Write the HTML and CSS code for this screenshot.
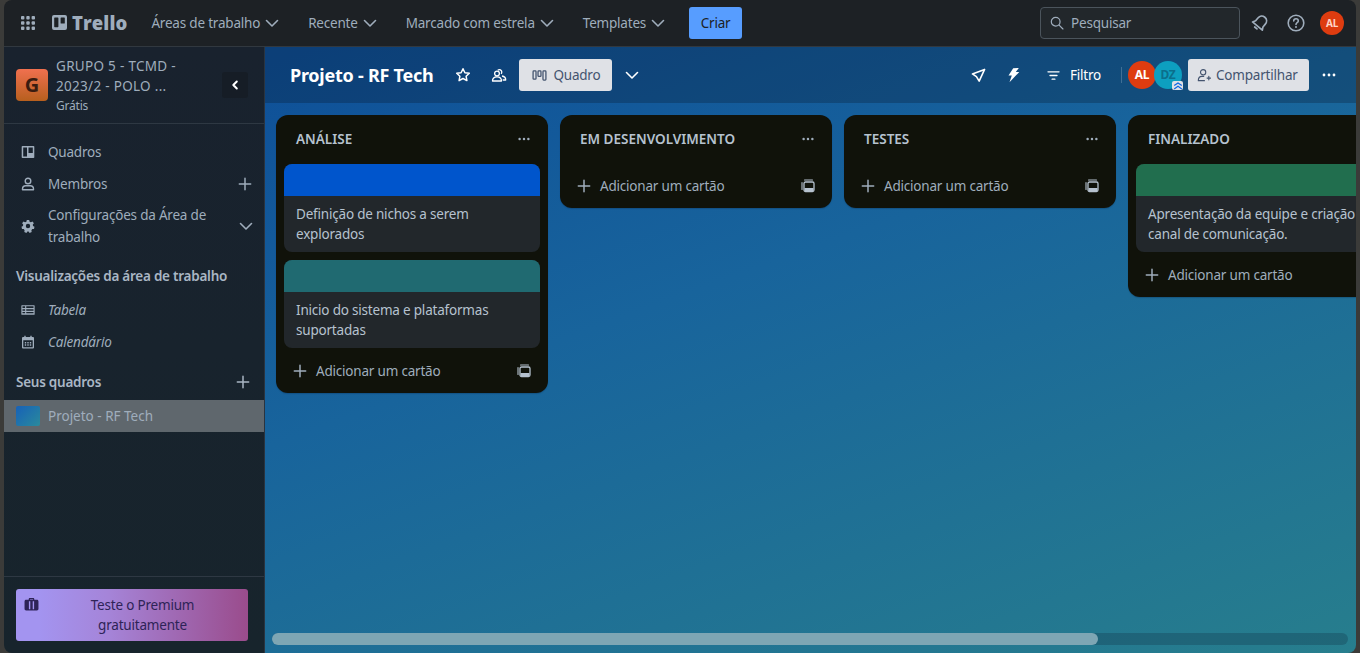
FILE: index.html
```html
<!DOCTYPE html>
<html lang="pt-BR">
<head>
    <meta charset="UTF-8">
    <meta name="viewport" content="width=device-width, initial-scale=1.0">
    <title>Projeto - RF Tech | Trello</title>
    <link rel="stylesheet" href="styles.css">
</head>
<body>
    <svg class="defs" width="0" height="0">
        <symbol id="chev" viewBox="0 0 16 16"><path d="M2.5 5.5 8 11l5.5-5.5" fill="none" stroke="currentColor" stroke-width="1.6" stroke-linecap="round" stroke-linejoin="round"/></symbol>
        <symbol id="plus" viewBox="0 0 16 16"><path d="M8 1.5v13M1.5 8h13" fill="none" stroke="currentColor" stroke-width="1.7" stroke-linecap="round"/></symbol>
        <symbol id="dots" viewBox="0 0 16 16"><circle cx="3" cy="8" r="1.4" fill="currentColor"/><circle cx="8" cy="8" r="1.4" fill="currentColor"/><circle cx="13" cy="8" r="1.4" fill="currentColor"/></symbol>
        <symbol id="tpl" viewBox="0 0 14 14"><path d="M3.5 1h8M1 3.500v7" fill="none" stroke="currentColor" stroke-width="1.100" stroke-linecap="round"/><rect x="3" y="3" width="10" height="9.500" rx="1.500" fill="none" stroke="currentColor" stroke-width="1.300"/><rect x="3.500" y="9" width="9" height="3" fill="currentColor"/></symbol>
    </svg>

    <div class="app">
        <header class="topbar">
            <svg class="grid-icon" viewBox="0 0 14 14" width="14" height="14">
                <g fill="currentColor">
                    <rect x="0" y="0" width="3.4" height="3.4" rx=".9"/><rect x="5.3" y="0" width="3.4" height="3.4" rx=".9"/><rect x="10.6" y="0" width="3.4" height="3.4" rx=".9"/>
                    <rect x="0" y="5.3" width="3.4" height="3.4" rx=".9"/><rect x="5.3" y="5.3" width="3.4" height="3.4" rx=".9"/><rect x="10.6" y="5.3" width="3.4" height="3.4" rx=".9"/>
                    <rect x="0" y="10.6" width="3.4" height="3.4" rx=".9"/><rect x="5.3" y="10.6" width="3.4" height="3.4" rx=".9"/><rect x="10.6" y="10.6" width="3.4" height="3.4" rx=".9"/>
                </g>
            </svg>
            <div class="logo">
                <svg viewBox="0 0 15 15" width="15" height="15"><path fill-rule="evenodd" fill="currentColor" d="M2 0h11a2 2 0 0 1 2 2v11a2 2 0 0 1-2 2H2a2 2 0 0 1-2-2V2a2 2 0 0 1 2-2Zm.8 2.4a.6.6 0 0 0-.6.6v8.6a.6.6 0 0 0 .6.6h3a.6.6 0 0 0 .6-.6V3a.6.6 0 0 0-.6-.6Zm6.4 0a.6.6 0 0 0-.6.6v5a.6.6 0 0 0 .6.6h3a.6.6 0 0 0 .6-.6V3a.6.6 0 0 0-.6-.6Z"/></svg>
                <span>Trello</span>
            </div>
            <nav class="topnav">
                <a class="nav-btn">Áreas de trabalho <svg width="16" height="16"><use href="#chev"/></svg></a>
                <a class="nav-btn">Recente <svg width="16" height="16"><use href="#chev"/></svg></a>
                <a class="nav-btn">Marcado com estrela <svg width="16" height="16"><use href="#chev"/></svg></a>
                <a class="nav-btn">Templates <svg width="16" height="16"><use href="#chev"/></svg></a>
            </nav>
            <button class="create">Criar</button>
            <div class="topright">
                <div class="search">
                    <svg viewBox="0 0 16 16" width="14" height="14"><circle cx="6.5" cy="6.5" r="5" fill="none" stroke="currentColor" stroke-width="1.4"/><path d="m10.4 10.4 4.4 4.4" stroke="currentColor" stroke-width="1.4" stroke-linecap="round"/></svg>
                    <span>Pesquisar</span>
                </div>
                <svg class="top-icon" viewBox="0 0 20 20" width="20" height="20"><g transform="rotate(40 10 10)" fill="none" stroke="currentColor" stroke-width="1.7" stroke-linejoin="round"><path d="M10 2.5c-3 0-4.8 2.2-4.8 5v3.6L3.6 14h12.8l-1.6-2.9V7.500c0-2.800-1.800-5-4.800-5Z"/><path d="M8.500 16.500h3" stroke-linecap="round"/></g></svg>
                <svg class="top-icon" viewBox="0 0 20 20" width="20" height="20"><circle cx="10" cy="10" r="7.800" fill="none" stroke="currentColor" stroke-width="1.600"/><path d="M7.700 8c0-1.400 1-2.300 2.300-2.300S12.300 6.600 12.300 7.900c0 1.800-2.300 1.800-2.300 3.500" fill="none" stroke="currentColor" stroke-width="1.600" stroke-linecap="round"/><circle cx="10" cy="14" r="1" fill="currentColor"/></svg>
                <div class="avatar small">AL</div>
            </div>
        </header>

        <div class="main">
            <aside class="sidebar">
                <div class="ws-head">
                    <div class="ws-logo">G</div>
                    <div class="ws-info">
                        <div class="ws-name">GRUPO 5 - TCMD -<br>2023/2 - POLO ...</div>
                        <div class="ws-plan">Grátis</div>
                    </div>
                    <button class="collapse"><svg viewBox="0 0 12 12" width="12" height="12"><path d="M7.800 2.500 4.300 6l3.500 3.500" fill="none" stroke="currentColor" stroke-width="2" stroke-linecap="round" stroke-linejoin="round"/></svg></button>
                </div>
                <div class="side-scroll">
                    <a class="side-item">
                        <svg viewBox="0 0 14 14" width="14" height="14"><path fill-rule="evenodd" fill="currentColor" d="M1.500 1h11a.8.8 0 0 1 .8.8v10.400a.8.8 0 0 1-.8.8h-11a.8.8 0 0 1-.8-.8V1.800a.8.800 0 0 1 .8-.8Zm.7 1.500v9H6v-9Zm5.300 0V8h4.300V2.500Z"/></svg>
                        <span>Quadros</span>
                    </a>
                    <a class="side-item">
                        <svg viewBox="0 0 14 14" width="14" height="14"><circle cx="7" cy="4" r="2.800" fill="none" stroke="currentColor" stroke-width="1.400"/><path d="M1.500 12.800v-.8c0-2 1.500-3.200 3.200-3.200h4.600c1.700 0 3.200 1.200 3.200 3.200v.8Z" fill="none" stroke="currentColor" stroke-width="1.400" stroke-linejoin="round"/></svg>
                        <span>Membros</span>
                        <svg class="side-act" width="14" height="14"><use href="#plus"/></svg>
                    </a>
                    <a class="side-item tall">
                        <svg viewBox="0 0 14 14" width="14" height="14"><path fill-rule="evenodd" fill="currentColor" d="M5.800 1h2.400l.4 1.700 1.300.6 1.600-.8 1.400 1.800-1.100 1.300.2 1.400 1.500.8-.5 2.200-1.700.1-.9 1.100.3 1.700-2.100 1-1-1.400H6.400l-1 1.400-2.100-1 .3-1.700-.9-1.100-1.700-.1L.5 7.800 2 7l.2-1.400L1.100 4.300l1.400-1.800 1.600.8 1.300-.6ZM7 4.800a2.200 2.200 0 1 0 0 4.400 2.200 2.200 0 0 0 0-4.400Z"/></svg>
                        <span>Configurações da Área de trabalho</span>
                        <svg class="side-act" width="16" height="16"><use href="#chev"/></svg>
                    </a>
                    <div class="side-title first">Visualizações da área de trabalho</div>
                    <a class="side-item">
                        <svg viewBox="0 0 16 14" width="16" height="14"><path fill-rule="evenodd" fill="currentColor" d="M1 1.500h14a.6.6 0 0 1 .6.6v9.800a.6.6 0 0 1-.6.6H1a.6.6 0 0 1-.6-.6V2.100a.6.6 0 0 1 .6-.6Zm.7 1.300v1.900h3V2.800Zm4.300 0v1.900h8.300V2.800ZM1.700 6v1.900h3V6ZM6 6v1.900h8.300V6ZM1.700 9.200v1.500h3V9.200Zm4.300 0v1.500h8.300V9.200Z"/></svg>
                        <span class="em">Tabela</span>
                    </a>
                    <a class="side-item">
                        <svg viewBox="0 0 14 14" width="14" height="14"><path fill-rule="evenodd" fill="currentColor" d="M3.300.8h1.400V2h4.600V.8h1.400V2H12a1 1 0 0 1 1 1v9.500a1 1 0 0 1-1 1H2a1 1 0 0 1-1-1V3a1 1 0 0 1 1-1h1.300Zm-1 4.500v6.900h9.400V5.300ZM3.800 7h1.400v1.400H3.800Zm2.500 0h1.400v1.400H6.300Zm2.500 0h1.400v1.400H8.800ZM3.800 9.300h1.400v1.400H3.800Zm2.500 0h1.400v1.400H6.300Zm2.500 0h1.400v1.400H8.800Z"/></svg>
                        <span class="em">Calendário</span>
                    </a>
                    <div class="side-title second">
                        <span>Seus quadros</span>
                        <svg width="14" height="14"><use href="#plus"/></svg>
                    </div>
                    <a class="board-row">
                        <div class="board-thumb"></div>
                        <span>Projeto - RF Tech</span>
                    </a>
                </div>
                <div class="side-foot">
                    <button class="premium">
                        <svg viewBox="0 0 16 14" width="15" height="13"><path fill-rule="evenodd" fill="currentColor" d="M5 2V1.200C5 .5 5.500 0 6.200 0h3.600c.7 0 1.200.5 1.200 1.200V2h2.800c1 0 1.700.7 1.700 1.700v8c0 1-.7 1.700-1.700 1.700H2.200C1.200 13.400.5 12.700.5 11.700v-8C.5 2.700 1.200 2 2.200 2Zm1.300 0h3.400v-.7H6.300ZM5.200 3.500v8.500h1.500V3.500Zm4.100 0v8.500h1.500V3.500Z"/></svg>
                        <span>Teste o Premium gratuitamente</span>
                    </button>
                </div>
            </aside>

            <section class="board">
                <div class="board-head">
                    <h1>Projeto - RF Tech</h1>
                    <svg class="hd-icon star" viewBox="0 0 16 16" width="16" height="16"><path d="m8 1.700 1.900 4 4.400.5-3.200 3 .8 4.400L8 11.500l-3.900 2.100.8-4.400-3.200-3 4.400-.5Z" fill="none" stroke="currentColor" stroke-width="1.500" stroke-linejoin="round"/></svg>
                    <svg class="hd-icon people" viewBox="0 0 16 16" width="16" height="16"><g fill="none" stroke="currentColor" stroke-width="1.300" stroke-linejoin="round"><circle cx="6" cy="6.500" r="2.400"/><path d="M1.500 14c0-3 2-4.200 4.500-4.200s4.500 1.200 4.500 4.200Z"/><path d="M6.800 3.300A2.300 2.300 0 1 1 10 6.800M11 9c2 .3 3.700 1.500 3.700 4h-3"/></g></svg>
                    <button class="light-btn view">
                        <svg viewBox="0 0 16 12" width="15" height="11"><g fill="none" stroke="currentColor" stroke-width="1.400"><rect x="1" y="1" width="3.200" height="9" rx=".8"/><rect x="6.400" y="1" width="3.200" height="6" rx=".8"/><rect x="11.800" y="1" width="3.200" height="10" rx=".8"/></g></svg>
                        <span>Quadro</span>
                    </button>
                    <svg class="hd-icon view-more" width="16" height="16"><use href="#chev"/></svg>
                    <div class="head-right">
                        <svg class="hd-icon" viewBox="0 0 16 16" width="15" height="15"><path d="M14.500 1.500 1.500 6.300l4.300 2.900 2.900 4.800Z" fill="none" stroke="currentColor" stroke-width="1.700" stroke-linejoin="round"/></svg>
                        <svg class="hd-icon bolt" viewBox="0 0 16 16" width="16" height="16"><path d="M8.200 1.200 13.800 1l-3 4h3.500L4.500 15.300l2.300-6.700H3.500Z" fill="currentColor"/></svg>
                        <a class="filter">
                            <svg viewBox="0 0 14 12" width="13" height="11"><path d="M1 2h12M3.200 6h7.600M5.500 10h3" stroke="currentColor" stroke-width="1.500" stroke-linecap="round"/></svg>
                            <span>Filtro</span>
                        </a>
                        <div class="divider"></div>
                        <div class="members">
                            <div class="avatar">AL</div>
                            <div class="avatar teal">DZ
                                <div class="admin-badge"><svg viewBox="0 0 10 8" width="10" height="8"><path d="M1.200 3.600 5 1l3.800 2.600M1.200 6.900 5 4.300l3.800 2.600" fill="none" stroke="#0c66e4" stroke-width="1.200"/></svg></div>
                            </div>
                        </div>
                        <button class="light-btn share">
                            <svg viewBox="0 0 16 16" width="14" height="14"><g fill="none" stroke="currentColor" stroke-width="1.300" stroke-linecap="round" stroke-linejoin="round"><circle cx="7" cy="4.800" r="3"/><path d="M1.500 14.500c0-3 1.400-5 4-5h2.200M11.500 11.500h4M13.500 9.500v4M1.500 14.500h7"/></g></svg>
                            <span>Compartilhar</span>
                        </button>
                        <svg class="hd-icon dots" width="16" height="16"><use href="#dots"/></svg>
                    </div>
                </div>

                <div class="lists">
                    <div class="list">
                        <div class="list-head"><h2>ANÁLISE</h2><svg width="14" height="14"><use href="#dots"/></svg></div>
                        <div class="cards">
                            <div class="card">
                                <div class="cover blue"></div>
                                <p>Definição de nichos a serem explorados</p>
                            </div>
                            <div class="card">
                                <div class="cover teal"></div>
                                <p>Inicio do sistema e plataformas suportadas</p>
                            </div>
                        </div>
                        <div class="list-foot"><svg class="add" width="14" height="14"><use href="#plus"/></svg><span>Adicionar um cartão</span><svg class="tpl" width="14" height="14"><use href="#tpl"/></svg></div>
                    </div>
                    <div class="list">
                        <div class="list-head"><h2>EM DESENVOLVIMENTO</h2><svg width="14" height="14"><use href="#dots"/></svg></div>
                        <div class="list-foot"><svg class="add" width="14" height="14"><use href="#plus"/></svg><span>Adicionar um cartão</span><svg class="tpl" width="14" height="14"><use href="#tpl"/></svg></div>
                    </div>
                    <div class="list">
                        <div class="list-head"><h2>TESTES</h2><svg width="14" height="14"><use href="#dots"/></svg></div>
                        <div class="list-foot"><svg class="add" width="14" height="14"><use href="#plus"/></svg><span>Adicionar um cartão</span><svg class="tpl" width="14" height="14"><use href="#tpl"/></svg></div>
                    </div>
                    <div class="list">
                        <div class="list-head"><h2>FINALIZADO</h2><svg width="14" height="14"><use href="#dots"/></svg></div>
                        <div class="cards">
                            <div class="card">
                                <div class="cover green"></div>
                                <p>Apresentação da equipe e criação do canal de comunicação.</p>
                            </div>
                        </div>
                        <div class="list-foot"><svg class="add" width="14" height="14"><use href="#plus"/></svg><span>Adicionar um cartão</span><svg class="tpl" width="14" height="14"><use href="#tpl"/></svg></div>
                    </div>
                </div>

                <div class="hscroll"><div class="hthumb"></div></div>
            </section>
        </div>
    </div>
</body>
</html>
```

FILE: styles.css
```css
* {
    box-sizing: border-box;
}
html, body {
    height: 100%;
}
body {
    margin: 0;
    background-color: #3b3b39;
    font-family: "Noto Sans", Arial, sans-serif;
    font-size: 13.5px;
    letter-spacing: -.2px;
    line-height: 20px;
    color: #9fadbc;
    overflow: hidden;
}
button {
    font: inherit;
    letter-spacing: inherit;
    border: none;
    cursor: pointer;
}
.defs {
    position: absolute;
}
.app {
    height: 653px;
    margin: 0 4px;
    display: flex;
    flex-direction: column;
    border-radius: 8px;
    overflow: hidden;
}

/* top bar */
.topbar {
    height: 47px;
    flex: none;
    display: flex;
    align-items: center;
    background-color: #1d2125;
    border-bottom: 1px solid #31383f;
    padding-left: 17px;
    padding-bottom: 1px;
}
.grid-icon {
    flex: none;
}
.logo {
    display: flex;
    align-items: center;
    margin-left: 17px;
    gap: 5px;
    color: #9fadbc;
}
.logo span {
    font-family: "Open Sans", sans-serif;
    font-size: 18.5px;
    font-weight: 800;
    letter-spacing: .1px;
}
.topnav {
    display: flex;
    gap: 28px;
    margin-left: 24px;
}
.nav-btn {
    display: flex;
    align-items: center;
    gap: 4px;
    white-space: nowrap;
}
.create {
    width: 53px;
    height: 32px;
    margin-left: 23px;
    background-color: #579dff;
    color: #1d2125;
    border-radius: 3px;
}
.topright {
    margin-left: auto;
    display: flex;
    align-items: center;
    padding-right: 12px;
}
.search {
    width: 200px;
    height: 32px;
    display: flex;
    align-items: center;
    gap: 7px;
    padding-left: 9px;
    border: 1px solid #4b545c;
    border-radius: 4px;
    background-color: #22272b;
    margin-right: 10px;
}
.top-icon {
    flex: none;
    margin-right: 16px;
}
.top-icon + .top-icon {
    margin-right: 14px;
}
.avatar {
    width: 28px;
    height: 28px;
    flex: none;
    position: relative;
    display: flex;
    align-items: center;
    justify-content: center;
    border-radius: 50%;
    background-color: #de3c10;
    color: #fff;
    font-size: 12px;
    font-weight: 700;
}
.avatar.small {
    width: 24px;
    height: 24px;
    font-size: 10px;
    color: #ffd5c8;
}
.avatar.teal {
    background-color: #0d9fc0;
    color: #0b6f8c;
    margin-left: -2px;
}

.main {
    flex: 1;
    display: flex;
    min-height: 0;
}

/* sidebar */
.sidebar {
    width: 261px;
    flex: none;
    display: flex;
    flex-direction: column;
    background: linear-gradient(#19222e, #17242c);
    border-right: 1px solid #2a3440;
}
.ws-head {
    height: 77px;
    flex: none;
    display: flex;
    align-items: center;
    padding: 0 16px 0 12px;
    border-bottom: 1px solid #2e3843;
}
.ws-logo {
    width: 32px;
    height: 32px;
    flex: none;
    border-radius: 4px;
    background: linear-gradient(#f0704f, #b75f1e);
    color: #3a1c10;
    font-size: 20px;
    font-weight: 700;
    display: flex;
    align-items: center;
    justify-content: center;
}
.ws-info {
    margin-left: 8px;
    flex: 1;
}
.ws-name {
    letter-spacing: .3px;
}
.ws-plan {
    margin-top: 2px;
    font-size: 12px;
    line-height: 16px;
}
.collapse {
    width: 26px;
    height: 26px;
    background-color: #161d26;
    border-radius: 3px;
    color: #fff;
    display: flex;
    align-items: center;
    justify-content: center;
    padding: 0;
}
.side-scroll {
    flex: 1;
    padding-top: 12px;
}
.side-item {
    min-height: 32px;
    display: flex;
    align-items: center;
    padding: 0 12px 0 17px;
    gap: 13px;
    color: #9fadbc;
}
.side-item > svg:first-child {
    flex: none;
    width: 14px;
}
.side-item > span {
    flex: 1;
}
.side-item .side-act {
    flex: none;
}
.side-item.tall {
    padding: 4px 10px 4px 17px;
    height: 52px;
}
.side-item.tall span {
    line-height: 22px;
}
.em {
    font-style: italic;
}
.side-title {
    font-weight: 600;
    letter-spacing: -.25px;
    padding: 0 14px 0 12px;
    display: flex;
    align-items: center;
    justify-content: space-between;
    color: #a9b6c4;
}
.side-title.first {
    margin-top: 14px;
    margin-bottom: 8px;
}
.side-title.second {
    margin-top: 14px;
    margin-bottom: 8px;
}
.board-row {
    height: 32px;
    display: flex;
    align-items: center;
    padding-left: 12px;
    gap: 8px;
    letter-spacing: 0;
    background-color: #5f676d;
}
.board-thumb {
    width: 24px;
    height: 20px;
    border-radius: 2px;
    background: linear-gradient(135deg, #1761b8, #2a8a9c);
}
.side-foot {
    height: 77px;
    flex: none;
    padding: 12px 16px 12px 12px;
    border-top: 1px solid #2e3843;
}
.premium {
    width: 232px;
    height: 52px;
    display: flex;
    align-items: flex-start;
    padding: 6px 8px;
    border-radius: 3px;
    background: linear-gradient(90deg, #a394f0 10%, #a584d8 40%, #9a4c8c);
    color: #2e2357;
}
.premium svg {
    flex: none;
    margin-top: 3px;
}
.premium span {
    flex: 1;
    padding: 0 24px 0 30px;
    text-align: center;
}

/* board */
.board {
    flex: 1;
    min-width: 0;
    display: flex;
    flex-direction: column;
    background: linear-gradient(160deg, #0e4f98 0%, #18649c 40%, #277e8d 100%);
}
.board-head {
    height: 56px;
    flex: none;
    display: flex;
    align-items: center;
    padding: 0 19px 0 25px;
    background-color: rgba(8, 20, 40, .28);
    color: #fff;
}
h1 {
    margin: 0;
    font-size: 18px;
    font-weight: 700;
    letter-spacing: -.25px;
    color: #fff;
}
.hd-icon {
    flex: none;
}
.star {
    margin-left: 22px;
}
.people {
    margin-left: 20px;
}
.light-btn {
    height: 32px;
    display: flex;
    align-items: center;
    border-radius: 3px;
    background-color: #dfe1e6;
    color: #44546f;
}
.view {
    width: 93px;
    margin-left: 12px;
    padding-left: 13px;
    gap: 6px;
}
.view-more {
    margin-left: 12px;
}
.head-right {
    margin-left: auto;
    display: flex;
    align-items: center;
}
.bolt {
    margin-left: 19px;
}
.filter {
    display: flex;
    align-items: center;
    gap: 10px;
    margin-left: 26px;
}
.divider {
    width: 1px;
    height: 16px;
    background-color: rgba(255, 255, 255, .2);
    margin-left: 20px;
}
.members {
    display: flex;
    margin-left: 6px;
}
.admin-badge {
    position: absolute;
    right: -1px;
    bottom: -1px;
    width: 11px;
    height: 9px;
    background-color: #dfe1e6;
    border-radius: 2px;
    display: flex;
    align-items: center;
    justify-content: center;
}
.share {
    width: 121px;
    margin-left: 6px;
    padding-left: 9px;
    gap: 5px;
}
.dots {
    margin-left: 12px;
}

/* lists */
.lists {
    flex: 1;
    min-height: 0;
    display: flex;
    align-items: flex-start;
    gap: 12px;
    padding: 12px 0 0 11px;
    overflow: hidden;
}
.list {
    width: 272px;
    flex: none;
    background-color: #10120a;
    border-radius: 12px;
    box-shadow: 0 1px 1px rgba(9, 30, 66, .25);
}
.list-head {
    height: 49px;
    display: flex;
    align-items: center;
    justify-content: space-between;
    padding: 0 17px 2px 20px;
}
h2 {
    margin: 0;
    font-size: 13.5px;
    font-weight: 600;
    letter-spacing: 0;
    color: #b6c2cf;
}
.cards {
    display: flex;
    flex-direction: column;
    gap: 8px;
    padding: 0 8px;
}
.card {
    background-color: #22272b;
    border-radius: 8px;
    overflow: hidden;
}
.cover {
    height: 32px;
}
.cover.blue { background-color: #0055cc; }
.cover.teal { background-color: #206a71; }
.cover.green { background-color: #216e4e; }
.card p {
    margin: 0;
    padding: 8px 12px;
    color: #b6c2cf;
}
.list-foot {
    height: 44px;
    display: flex;
    align-items: center;
    padding: 0 17px 1px 17px;
}
.cards + .list-foot {
    height: 45px;
    padding-bottom: 0;
    padding-top: 1px;
}
.list-foot .add {
    flex: none;
}
.list-foot span {
    flex: 1;
    margin-left: 9px;
}
.list-foot .tpl {
    flex: none;
    color: #b6c2cf;
}

/* fake horizontal scrollbar */
.hscroll {
    flex: none;
    height: 12px;
    margin: 0 8px 8px 7px;
    border-radius: 6px;
    background-color: rgba(20, 60, 80, .35);
}
.hthumb {
    width: 826px;
    height: 12px;
    border-radius: 6px;
    background-color: #7ea6b4;
}
```
